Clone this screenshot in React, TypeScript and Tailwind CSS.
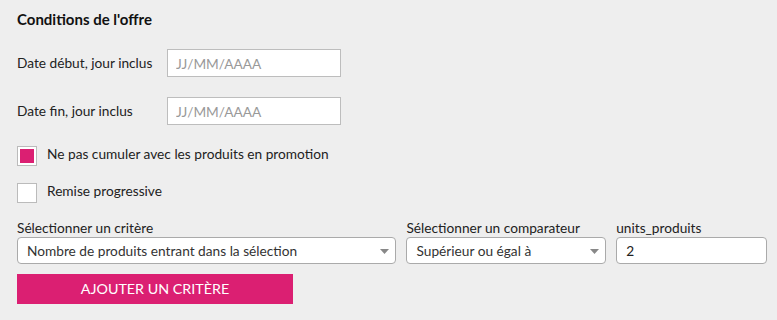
import React, { useState } from 'react';

const font = { fontFamily: 'Lato, "Open Sans", sans-serif' };

const Arrow = () => (
  <svg width="9" height="5" viewBox="0 0 9 5" className="absolute right-[6px] top-[11px]">
    <path d="M0 0 H9 L4.5 5 Z" fill="#888" />
  </svg>
);

export default function App() {
  const [noCumul, setNoCumul] = useState(true);
  const [progressive, setProgressive] = useState(false);

  return (
    <div className="w-[777px] h-[320px] bg-[#eeeeee] pl-[17px] pr-[10px] pt-[9px] text-[#222] text-[13.7px]" style={font}>
      <h3 className="h-[20px] leading-[20px] text-[15px] font-bold text-[#111]">Conditions de l'offre</h3>

      {/* Dates */}
      <div className="mt-[20px] flex items-center h-[28px]">
        <label className="w-[150px]">Date début, jour inclus</label>
        <input
          placeholder="JJ/MM/AAAA"
          className="w-[174px] h-[28px] bg-white border border-[#bdbdbd] px-[8px] text-[13.7px] placeholder:text-[#999] outline-none"
        />
      </div>
      <div className="mt-[20px] flex items-center h-[28px]">
        <label className="w-[150px]">Date fin, jour inclus</label>
        <input
          placeholder="JJ/MM/AAAA"
          className="w-[174px] h-[28px] bg-white border border-[#bdbdbd] px-[8px] text-[13.7px] placeholder:text-[#999] outline-none"
        />
      </div>

      {/* Checkboxes */}
      <div className="mt-[21px] flex items-center h-[20px] cursor-pointer" onClick={() => setNoCumul(!noCumul)}>
        <div className="w-[20px] h-[20px] bg-white border border-[#bbb] p-[2px]">
          {noCumul && <div className="w-full h-full bg-[#db1f72]" />}
        </div>
        <span className="ml-[10px] -mt-[4px]">Ne pas cumuler avec les produits en promotion</span>
      </div>
      <div className="mt-[17px] flex items-center h-[20px] cursor-pointer" onClick={() => setProgressive(!progressive)}>
        <div className="w-[20px] h-[20px] bg-white border border-[#bbb] p-[2px]">
          {progressive && <div className="w-full h-full bg-[#db1f72]" />}
        </div>
        <span className="ml-[10px] -mt-[4px]">Remise progressive</span>
      </div>

      {/* Criteria */}
      <div className="mt-[16px] flex">
        <div className="w-[380px]">
          <div className="h-[18px] leading-[18px]">Sélectionner un critère</div>
          <div className="relative h-[27px] bg-white border border-[#aaa] rounded-[4px] pl-[9px] leading-[25px] text-[#333]">
            Nombre de produits entrant dans la sélection
            <Arrow />
          </div>
        </div>
        <div className="w-[200px] ml-[10px]">
          <div className="h-[18px] leading-[18px]">Sélectionner un comparateur</div>
          <div className="relative h-[27px] bg-white border border-[#aaa] rounded-[4px] pl-[9px] leading-[25px] text-[#333]">
            Supérieur ou égal à
            <Arrow />
          </div>
        </div>
        <div className="w-[151px] ml-[10px]">
          <div className="h-[18px] leading-[18px]">units_produits</div>
          <input
            defaultValue="2"
            className="w-full h-[27px] bg-white border border-[#aaa] rounded-[4px] pl-[9px] text-[13.7px] text-[#222] outline-none"
          />
        </div>
      </div>

      <button className="mt-[10px] w-[276px] h-[30px] bg-[#db1f72] text-white text-[14.3px] uppercase">
        Ajouter un critère
      </button>
    </div>
  );
}
